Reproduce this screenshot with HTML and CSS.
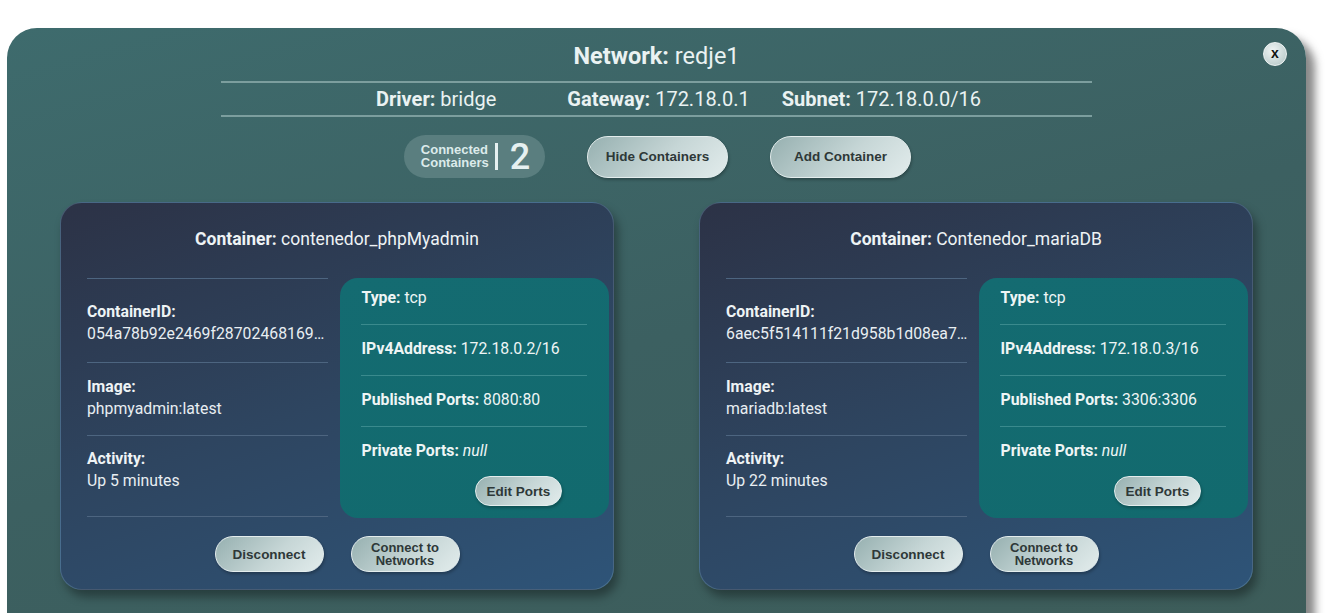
FILE: index.html
```html
<!DOCTYPE html>
<html lang="en">
<head>
<meta charset="utf-8">
<title>Network: redje1</title>
<link rel="stylesheet" href="styles.css">
</head>
<body>
<div class="modal">
  <button class="close-btn">x</button>
  <h1 class="net-title"><b>Network:</b> redje1</h1>
  <div class="net-info">
    <div class="info-item driver"><b>Driver:</b> bridge</div>
    <div class="info-item gateway"><b>Gateway:</b> 172.18.0.1</div>
    <div class="info-item"><b>Subnet:</b> 172.18.0.0/16</div>
  </div>
  <div class="actions">
    <div class="count-pill">
      <span class="count-label">Connected<br>Containers</span>
      <span class="count-bar"></span>
      <span class="count-num">2</span>
    </div>
    <button class="btn btn-lg">Hide Containers</button>
    <button class="btn btn-lg">Add Container</button>
  </div>
  <div class="cards">
    <div class="card">
      <div class="card-title"><b>Container:</b> contenedor_phpMyadmin</div>
      <div class="card-body">
        <div class="details">
          <div class="detail"><b>ContainerID:</b><span class="value">054a78b92e2469f28702468169a3c2d41f0e</span></div>
          <div class="detail"><b>Image:</b><span class="value">phpmyadmin:latest</span></div>
          <div class="detail"><b>Activity:</b><span class="value">Up 5 minutes</span></div>
        </div>
        <div class="ports">
          <div class="port-row"><b>Type:</b> tcp</div>
          <div class="port-row"><b>IPv4Address:</b> 172.18.0.2/16</div>
          <div class="port-row"><b>Published Ports:</b> 8080:80</div>
          <div class="port-row last"><b>Private Ports:</b> <i>null</i></div>
          <div class="ports-actions"><button class="btn btn-sm">Edit Ports</button></div>
        </div>
      </div>
      <div class="card-actions">
        <button class="btn btn-md">Disconnect</button>
        <button class="btn btn-md two-line">Connect to<br>Networks</button>
      </div>
    </div>
    <div class="card">
      <div class="card-title"><b>Container:</b> Contenedor_mariaDB</div>
      <div class="card-body">
        <div class="details">
          <div class="detail"><b>ContainerID:</b><span class="value">6aec5f514111f21d958b1d08ea7c3b90d2e1</span></div>
          <div class="detail"><b>Image:</b><span class="value">mariadb:latest</span></div>
          <div class="detail"><b>Activity:</b><span class="value">Up 22 minutes</span></div>
        </div>
        <div class="ports">
          <div class="port-row"><b>Type:</b> tcp</div>
          <div class="port-row"><b>IPv4Address:</b> 172.18.0.3/16</div>
          <div class="port-row"><b>Published Ports:</b> 3306:3306</div>
          <div class="port-row last"><b>Private Ports:</b> <i>null</i></div>
          <div class="ports-actions"><button class="btn btn-sm">Edit Ports</button></div>
        </div>
      </div>
      <div class="card-actions">
        <button class="btn btn-md">Disconnect</button>
        <button class="btn btn-md two-line">Connect to<br>Networks</button>
      </div>
    </div>
  </div>
</div>
</body>
</html>
```

FILE: styles.css
```css
* { box-sizing: border-box; }

html, body {
  margin: 0;
  padding: 0;
  background: #ffffff;
  overflow: hidden;
}

body {
  font-family: Roboto, "Liberation Sans", Arial, sans-serif;
  color: #e8f0f0;
}

.modal {
  position: relative;
  margin: 28px 24px 0 7px;
  height: 620px;
  border-radius: 30px;
  background: linear-gradient(165deg, #3e6b6d 0%, #3c6061 50%, #3d5c59 100%);
  box-shadow: 9px 9px 8px rgba(40, 40, 40, 0.55);
  padding: 14px 53px 0;
}

.close-btn {
  position: absolute;
  top: 14px;
  right: 19px;
  width: 24px;
  height: 24px;
  border-radius: 50%;
  border: 1px solid #eef3f3;
  background: radial-gradient(circle at 40% 35%, #f0f5f5 0%, #c4d2d2 70%, #a9bcbc 100%);
  color: #111;
  font-family: "Liberation Sans", Arial, sans-serif;
  font-weight: bold;
  font-size: 14px;
  line-height: 18px;
  padding: 0 0 2px;
  cursor: pointer;
}

.net-title {
  margin: 0 0 11px;
  text-align: center;
  font-size: 23.5px;
  line-height: 28px;
  font-weight: 400;
  color: #eaf2f2;
}

.net-title b { font-weight: 700; }

.net-info {
  width: 871px;
  margin: 0 auto;
  border-top: 2px solid #7c9e9e;
  border-bottom: 2px solid #7c9e9e;
  height: 36px;
  display: flex;
  justify-content: flex-start;
  align-items: center;
  padding-left: 155px;
  font-size: 20px;
  color: #eaf2f2;
}

.info-item { white-space: nowrap; }
.info-item.driver { margin-right: 71px; }
.info-item.gateway { margin-right: 32px; }
.info-item b { font-weight: 700; }

.actions {
  margin-top: 18px;
  display: flex;
  justify-content: center;
  align-items: center;
  gap: 42px;
  padding-left: 2px;
}

.count-pill {
  width: 141px;
  height: 43px;
  border-radius: 22px;
  background: #5a7e7f;
  display: flex;
  align-items: center;
  justify-content: center;
  gap: 7px;
  padding-left: 2px;
}

.count-label {
  font-family: "Liberation Sans", Arial, sans-serif;
  font-size: 13px;
  line-height: 12.5px;
  font-weight: 700;
  color: #dcebeb;
  text-align: left;
}

.count-bar {
  width: 3px;
  height: 27px;
  background: #e6f0f0;
  margin-left: -1px;
}

.count-num {
  font-size: 36px;
  line-height: 36px;
  font-weight: 500;
  color: #e6f0f0;
  margin-left: 5px;
}

.btn {
  font-family: "Liberation Sans", Arial, sans-serif;
  font-weight: 700;
  color: #2e3838;
  border: 1px solid #e4eded;
  background: linear-gradient(135deg, #96b0b0 0%, #c6d6d6 55%, #e2ecec 100%);
  border-radius: 999px;
  cursor: pointer;
  padding: 0;
  box-shadow: 1px 2px 3px rgba(0, 0, 0, 0.25);
}

.btn-lg {
  width: 141px;
  height: 42px;
  font-size: 13.5px;
}

.btn-md {
  width: 109px;
  height: 36px;
  font-size: 13.5px;
}

.btn-md.two-line {
  font-size: 13px;
  line-height: 13px;
}

.btn-sm {
  width: 87px;
  height: 30px;
  font-size: 13.5px;
}

.cards {
  margin-top: 24px;
  display: flex;
  gap: 85px;
}

.card {
  width: 554px;
  height: 388px;
  border-radius: 22px;
  background: linear-gradient(160deg, #2c3246 0%, #2e4560 50%, #2e5478 100%);
  border: 1px solid rgba(120, 160, 190, 0.35);
  box-shadow: 4px 7px 10px rgba(0, 0, 0, 0.35);
  padding: 25px 4px 0 26px;
}

.card-title {
  text-align: center;
  font-size: 17.5px;
  line-height: 22px;
  margin-left: -22px;
  color: #eef3f5;
}

.card-title b { font-weight: 700; }

.card-body {
  margin-top: 28px;
  display: flex;
  gap: 12px;
  height: 240px;
}

.details {
  width: 242px;
  border-top: 1px solid #4d6580;
  display: grid;
  grid-template-rows: 84px 73px 81px;
}

.detail {
  border-bottom: 1px solid #4d6580;
  display: flex;
  flex-direction: column;
  justify-content: center;
  font-size: 15.8px;
  line-height: 22px;
  padding-bottom: 3px;
  min-width: 0;
}

.detail:first-child { padding-top: 8px; }
.detail:last-child { padding-bottom: 12px; }

.detail b {
  font-weight: 700;
  color: #eef3f5;
}

.value {
  white-space: nowrap;
  overflow: hidden;
  text-overflow: ellipsis;
  color: #e8eef2;
}

.ports {
  width: 269px;
  border-radius: 18px;
  background: linear-gradient(170deg, #146b71 0%, #126a6e 100%);
  padding: 9px 22px 11px 21px;
  font-size: 15.8px;
  line-height: 22px;
  color: #eef5f5;
}

.ports b { font-weight: 700; }

.port-row {
  padding-bottom: 15px;
  border-bottom: 1px solid #3a8a8d;
}

.port-row + .port-row { padding-top: 13px; }

.port-row.last {
  border-bottom: none;
  padding-bottom: 0;
}

.ports-actions {
  margin-top: 14px;
  display: flex;
  justify-content: flex-end;
  padding-right: 25px;
}

.card-actions {
  margin-top: 18px;
  margin-left: -22px;
  display: flex;
  justify-content: center;
  gap: 27px;
}
```
